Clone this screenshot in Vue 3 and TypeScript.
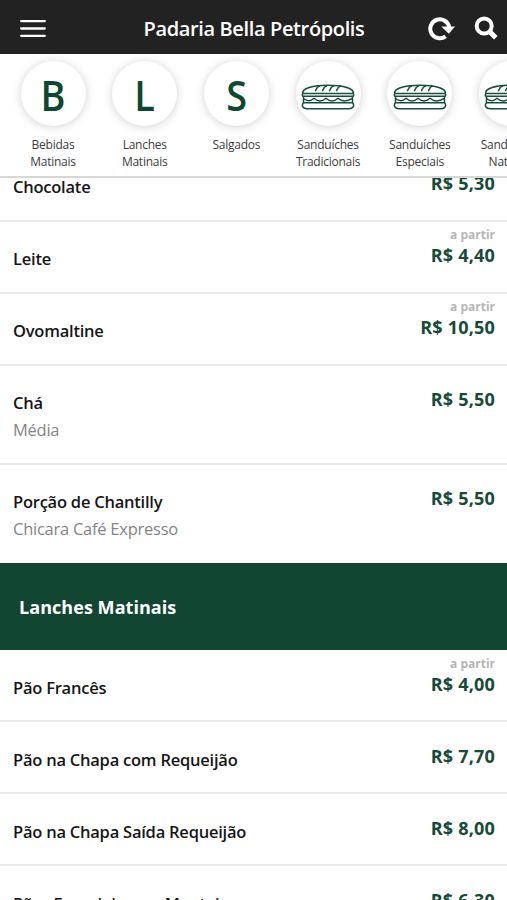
<script setup lang="ts">
interface Category { lines: string[]; letter?: string }
interface Product { name: string; price: string; from?: boolean; detail?: string }

const categories: Category[] = [
  { lines: ['Bebidas', 'Matinais'], letter: 'B' },
  { lines: ['Lanches', 'Matinais'], letter: 'L' },
  { lines: ['Salgados'], letter: 'S' },
  { lines: ['Sanduíches', 'Tradicionais'] },
  { lines: ['Sanduíches', 'Especiais'] },
  { lines: ['Sanduíches', 'Naturais'] },
]
const drinks: Product[] = [
  { name: 'Chocolate', price: 'R$ 5,30' },
  { name: 'Leite', price: 'R$ 4,40', from: true },
  { name: 'Ovomaltine', price: 'R$ 10,50', from: true },
  { name: 'Chá', price: 'R$ 5,50', detail: 'Média' },
  { name: 'Porção de Chantilly', price: 'R$ 5,50', detail: 'Chicara Café Expresso' },
]
const snacks: Product[] = [
  { name: 'Pão Francês', price: 'R$ 4,00', from: true },
  { name: 'Pão na Chapa com Requeijão', price: 'R$ 7,70' },
  { name: 'Pão na Chapa Saída Requeijão', price: 'R$ 8,00' },
  { name: 'Pães Especiais com Manteiga', price: 'R$ 6,30' },
]
const sections = [
  { title: '', items: drinks },
  { title: 'Lanches Matinais', items: snacks },
]
</script>

<template>
  <div class="app">
    <header class="topbar">
      <svg class="menu" width="26" height="20" viewBox="0 0 26 20">
        <path d="M1.200 2.200H24.800M1.200 9.500H24.800M1.200 16.800H24.800" stroke="#fff" stroke-width="2.300" stroke-linecap="round" />
      </svg>
      <h1>Padaria Bella Petrópolis</h1>
      <div class="actions">
        <svg width="28" height="26" viewBox="0 0 28 26">
          <path d="M17.600 20.300A9.500 9.500 0 1 1 21.200 11.500" fill="none" stroke="#fff" stroke-width="4" />
          <path d="M13.300 10.500H27L20.800 17.800Z" fill="#fff" />
        </svg>
        <svg width="25" height="26" viewBox="0 0 25 26">
          <circle cx="10.200" cy="10" r="7.500" fill="none" stroke="#fff" stroke-width="4" />
          <path d="M15.300 15.300L21.800 21.800" stroke="#fff" stroke-width="5" />
        </svg>
      </div>
    </header>

    <nav class="categories">
      <a v-for="(c, i) in categories" :key="i" class="category">
        <span class="disc">
          <span v-if="c.letter" class="letter">{{ c.letter }}</span>
          <svg v-else class="sandwich" width="54" height="26" viewBox="0 0 54 26" fill="none" stroke="#174f3c" stroke-width="1.500" stroke-linecap="round" stroke-linejoin="round">
            <path d="M2 9.500C0 4.500 12 1.300 27 1.300S54 4.500 52 9.500Z" />
            <path d="M14.500 6.700L16.500 3.200 18.500 2.200M21.500 6.700L23.500 3.200 25.500 2.200M28.500 6.700L30.500 3.200 32.500 2.200M35.500 6.700L37.500 3.200 39.500 2.200" />
            <path d="M2 9.500C.8 10.500 1 12.300 2.500 12.300H51.500C53 12.300 53.200 10.500 52 9.500" />
            <path d="M2.500 12.500V18.500M51.500 12.500V18.500M2.500 14.500C6 17.500 9 18 13 14.300 17 18 21 18 25 14.300 29 18 33 18 37 14.300 41 18 46 17.500 51.500 14.300" />
            <path d="M2.500 18.700H51.500C54 21.500 52 24.700 48 24.700H6C2 24.700 0 21.500 2.500 18.700Z" />
          </svg>
        </span>
        <span class="label"><span v-for="line in c.lines" :key="line">{{ line }}</span></span>
      </a>
    </nav>

    <main class="list">
      <section v-for="s in sections" :key="s.title">
        <h2 v-if="s.title">{{ s.title }}</h2>
        <article v-for="p in s.items" :key="p.name" class="product" :class="{ tall: p.detail, titled: s.title }">
          <div class="info">
            <span class="name">{{ p.name }}</span>
            <span v-if="p.detail" class="detail">{{ p.detail }}</span>
          </div>
          <div class="cost">
            <span class="from">{{ p.from ? 'a partir' : '' }}</span>
            <span class="price">{{ p.price }}</span>
          </div>
        </article>
      </section>
    </main>
  </div>
</template>

<style>
body { margin: 0; overflow: hidden; background: #fff; }
</style>

<style scoped>
.app {
  display: flex;
  flex-direction: column;
  height: 900px;
  overflow: hidden;
  font-family: "Open Sans", "Noto Sans", sans-serif;
}
.topbar {
  display: flex;
  flex: none;
  align-items: center;
  box-sizing: border-box;
  height: 54px;
  padding: 3px 8px 0 20px;
  background: #222;
}
h1 {
  flex: 1;
  margin: 0 0 0 34px;
  color: #fff;
  font-size: 20px;
  font-weight: 600;
  line-height: 26px;
  letter-spacing: -0.37px;
  text-align: center;
  white-space: nowrap;
}
.actions { display: flex; gap: 18px; }
.categories {
  display: flex;
  flex: none;
  gap: 7.700px;
  box-sizing: border-box;
  height: 124px;
  padding: 7px 0 0 11px;
  border-bottom: 2px solid #d6d6d6;
  overflow: hidden;
}
.category {
  display: flex;
  flex: none;
  flex-direction: column;
  align-items: center;
  width: 84px;
}
.disc {
  display: flex;
  align-items: center;
  justify-content: center;
  width: 65px;
  height: 65px;
  border-radius: 50%;
  background: #fff;
  box-shadow: 0 1px 10px rgba(0, 0, 0, 0.18);
}
.letter {
  color: #0c4730;
  font-size: 42px;
  font-weight: 600;
  line-height: 60px;
  transform: translateY(1px) scaleX(0.9);
}
.sandwich { margin-top: 7px; }
.label {
  display: flex;
  flex-direction: column;
  align-items: center;
  margin-top: 10px;
  color: #3c3c3c;
  font-size: 12px;
  line-height: 17px;
  letter-spacing: -0.25px;
}
.list { flex: 1; min-height: 0; overflow: hidden; }
.list section:first-child { margin-top: -28px; }
.product {
  display: flex;
  justify-content: space-between;
  box-sizing: border-box;
  height: 72px;
  padding: 0 12px 0 13px;
  border-bottom: 2px solid #e9e9e9;
}
.product.tall { height: 99px; }
.product.tall:last-child { height: 98px; }
.product:last-child { border-bottom-color: transparent; }
.info { display: flex; flex-direction: column; padding-top: 24px; }
.titled .info { padding-top: 25px; }
.name {
  color: #161616;
  font-size: 16.500px;
  font-weight: 600;
  line-height: 26px;
  letter-spacing: -0.23px;
}
.detail { color: #858585; font-size: 16.500px; line-height: 27px; letter-spacing: -0.25px; }
.cost { display: flex; flex-direction: column; align-items: flex-end; padding-top: 4px; }
.titled .cost { padding-top: 5px; }
.from { height: 17px; color: #b5b5b5; font-size: 12px; font-weight: 700; line-height: 17px; }
.price { color: #164b38; font-size: 18px; font-weight: 700; line-height: 25px; letter-spacing: 0.2px; }
h2 {
  box-sizing: border-box;
  height: 87px;
  margin: 0;
  padding-left: 19px;
  background: #114633;
  color: #fff;
  font-size: 18px;
  font-weight: 700;
  line-height: 88px;
  letter-spacing: 0.05px;
}
</style>
